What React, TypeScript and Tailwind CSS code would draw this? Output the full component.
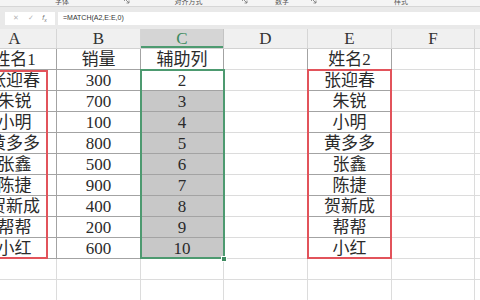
import React from "react";

const widths = ["w-[84px]", "w-[84px]", "w-[83px]", "w-[84px]", "w-[84px]", "w-[83px]", "w-[84px]"];
const letters = ["A", "B", "C", "D", "E", "F", "G"];

const rows: string[][] = [
  ["姓名1", "销量", "辅助列", "", "姓名2", "", ""],
  ["张迎春", "300", "2", "", "张迎春", "", ""],
  ["朱锐", "700", "3", "", "朱锐", "", ""],
  ["小明", "100", "4", "", "小明", "", ""],
  ["黄多多", "800", "5", "", "黄多多", "", ""],
  ["张鑫", "500", "6", "", "张鑫", "", ""],
  ["陈捷", "900", "7", "", "陈捷", "", ""],
  ["贺新成", "400", "8", "", "贺新成", "", ""],
  ["帮帮", "200", "9", "", "帮帮", "", ""],
  ["小红", "600", "10", "", "小红", "", ""],
  ["", "", "", "", "", "", ""],
  ["", "", "", "", "", "", ""],
];

const inTable = (r: number, c: number) => r >= 0 && r <= 9 && (c <= 2 || c === 4);

const ribbonGroups = [
  { label: "字体", w: "w-[135px]" },
  { label: "对齐方式", w: "w-[118px]" },
  { label: "数字", w: "w-[69px]" },
  { label: "样式", w: "flex-1" },
];

function Launcher() {
  return (
    <svg width="6" height="6" viewBox="0 0 6 6" className="mr-[5px] -mt-[2px]">
      <path d="M0.5 0.5H3M0.5 0.5V3M1 1L5 5M5 2.5V5H2.5" stroke="#777" strokeWidth="0.8" fill="none" />
    </svg>
  );
}

export default function App() {
  return (
    <div
      className="w-[480px] h-[300px] overflow-hidden bg-white text-[#2b2b2b]"
      style={{ fontFamily: '"Liberation Serif", "Noto Sans CJK SC", serif' }}
    >
      {/* ribbon group labels */}
      <div className="h-[7px] flex bg-[#f4f4f4] border-b border-[#d6d6d6] overflow-hidden">
        {ribbonGroups.map((g, i) => (
          <div key={i} className={`${g.w} flex items-start justify-between overflow-hidden`}>
            <span className="flex-1 text-center text-[7px] leading-none -mt-[2px] text-[#555] font-['Noto_Sans_CJK_SC',sans-serif]">
              {g.label}
            </span>
            {i < 3 && <Launcher />}
          </div>
        ))}
      </div>

      {/* formula bar */}
      <div className="h-[22px] bg-[#e9e9e9] flex items-center pl-[5px] gap-[3px] pt-[1px]">
        <div className="w-[50px] h-[13px] bg-white flex items-center justify-around px-[4px] text-[#b5b5b5] text-[7px] font-['Liberation_Sans',sans-serif]">
          <span>✕</span>
          <span>✓</span>
          <span className="italic text-[#777]">f<sub className="text-[5px]">x</sub></span>
        </div>
        <div className="flex-1 h-[13px] bg-white flex items-center pl-[5px] text-[7px] text-[#333] font-['Liberation_Sans',sans-serif]">
          =MATCH(A2,E:E,0)
        </div>
      </div>

      {/* sheet */}
      <div className="relative -ml-[27px] w-[600px]">
        <div className="flex h-[20px] bg-[#f0f0f0] border-b border-[#d2d2d2]">
          {letters.map((l, c) => (
            <div
              key={l}
              className={`${widths[c]} shrink-0 flex items-center justify-center text-[17px] leading-none border-r ${
                c === 2
                  ? "bg-[#d5d5d5] text-[#3d8a5f] border-r-[#c4c4c4] shadow-[inset_0_-2px_0_#4d9a70]"
                  : "text-[#333] border-r-[#d6d6d6]"
              }`}
            >
              {l}
            </div>
          ))}
        </div>

        {rows.map((row, r) => (
          <div key={r} className="flex h-[21px]">
            {row.map((v, c) => {
              const darkR = inTable(r, c) || inTable(r, c + 1);
              const darkB = inTable(r, c) || inTable(r + 1, c);
              const sel = c === 2 && r >= 2 && r <= 9;
              return (
                <div
                  key={c}
                  className={`${widths[c]} shrink-0 flex items-center justify-center text-[17px] leading-none border-r border-b ${
                    darkR ? "border-r-[#a3a3a3]" : "border-r-[#dcdcdc]"
                  } ${darkB ? "border-b-[#a3a3a3]" : "border-b-[#dcdcdc]"} ${sel ? "bg-[#c8c8c8]" : "bg-white"}`}
                >
                  {v}
                </div>
              );
            })}
          </div>
        ))}

        {/* red outline around A2:A10 */}
        <div className="absolute left-[25px] top-[41px] w-[50px] h-[189px] border-2 border-[#e2535b] pointer-events-none" />
        {/* red outline around E2:E10 */}
        <div className="absolute left-[334px] top-[40px] w-[85px] h-[190px] border-2 border-[#e2535b] pointer-events-none" />
        {/* selection C2:C10 */}
        <div className="absolute left-[167px] top-[40px] w-[85px] h-[190px] border-2 border-[#4d9a70] pointer-events-none" />
        <div className="absolute left-[248px] top-[227px] w-[6px] h-[6px] bg-[#3d8a5f] border border-white" />
      </div>
    </div>
  );
}
